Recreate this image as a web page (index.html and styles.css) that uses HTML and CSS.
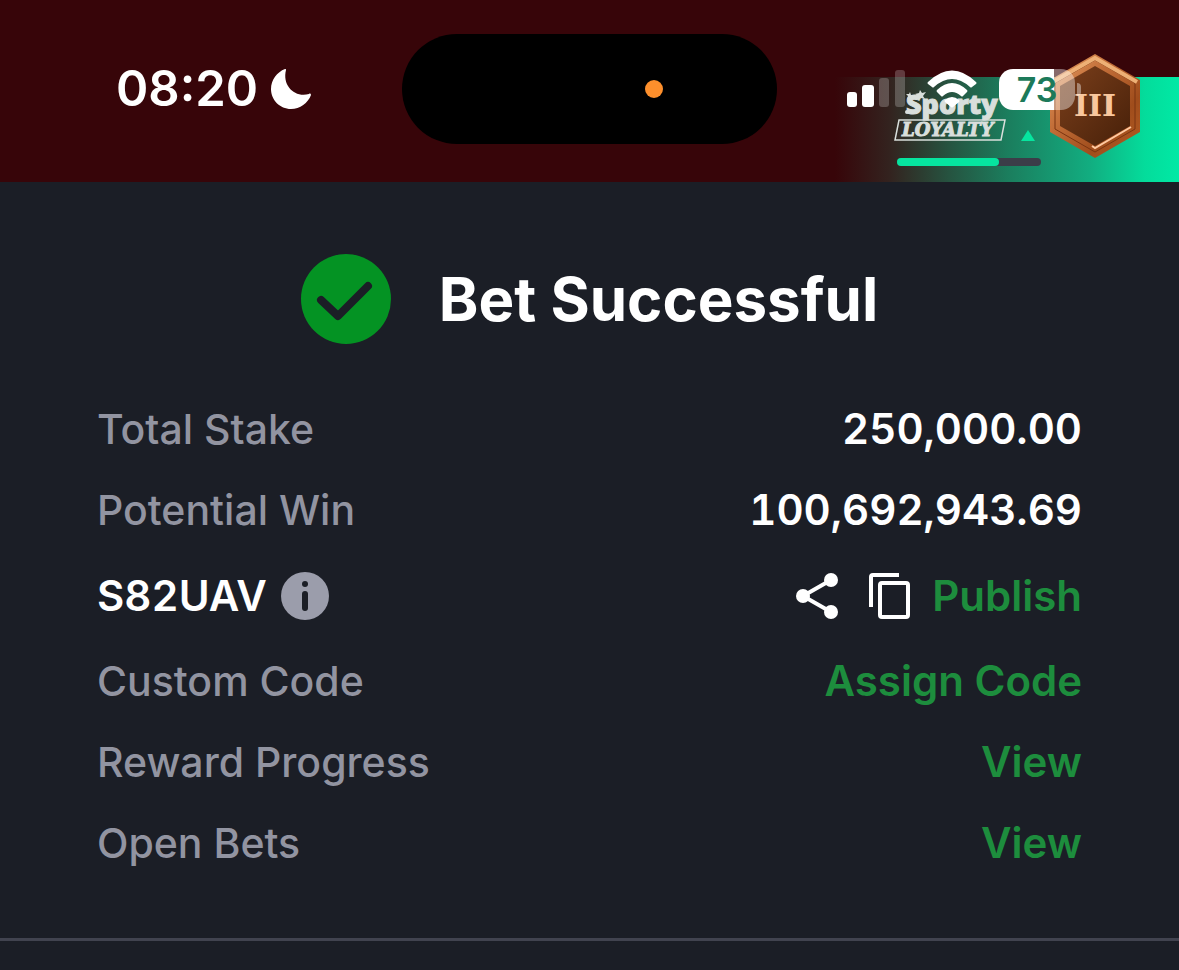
FILE: index.html
```html
<!DOCTYPE html>
<html lang="en">
<head>
    <meta charset="UTF-8">
    <meta name="viewport" content="width=device-width, initial-scale=1.0">
    <title>Bet Successful</title>
    <link rel="stylesheet" href="styles.css">
</head>
<body>
    <header class="header">
        <div class="loyalty">
            <div class="loyalty-info">
                <div class="loyalty-top">
                    <svg class="loyalty-logo" viewBox="0 0 112 52" role="img" aria-label="Sporty Loyalty">
                        <path d="M4 31H110L106 51H0Z" fill="none" stroke="#d9dfdc" stroke-width="1.5"/>
                        <circle cx="12" cy="23" r="2" fill="#d9dfdc"/>
                        <path d="M25 1l2 3 4-1-3 4 2 3-4-1-3 2 0-4-3-2 4-1z" fill="#d9dfdc"/>
                        <path d="M15 3l1 3 3 0-2 2 0 3-2-2-3 1 1-3-2-2 3 0z" fill="#d9dfdc"/>
                        <text class="logo-sporty" x="11" y="25">Sporty</text>
                        <text class="logo-loyalty" x="7" y="47">LOYALTY</text>
                    </svg>
                    <svg class="arrow-up" viewBox="0 0 14 11"><path d="M7 0L14 11H0Z" fill="#06e59f"/></svg>
                </div>
                <div class="progress"><div class="progress-value"></div></div>
            </div>
            <div class="badge">
                <svg class="badge-shape" viewBox="0 0 94 106">
                    <defs>
                        <linearGradient id="bronze" x1="0" y1="0" x2="1" y2="1">
                            <stop offset="0" stop-color="#e6a065"/>
                            <stop offset="0.35" stop-color="#c4703a"/>
                            <stop offset="0.7" stop-color="#a04d1c"/>
                            <stop offset="1" stop-color="#b55d22"/>
                        </linearGradient>
                        <linearGradient id="core" x1="0" y1="0" x2="1" y2="1">
                            <stop offset="0" stop-color="#7b3f1b"/>
                            <stop offset="1" stop-color="#472009"/>
                        </linearGradient>
                    </defs>
                    <path d="M47 1L92 27V79L47 105L2 79V27Z" fill="url(#bronze)"/>
                    <path d="M47 7L87 30V76L47 99L7 76V30Z" fill="none" stroke="#7b3410" stroke-width="1"/>
                    <path d="M5 29L47 5L89 29" fill="none" stroke="#eeb075" stroke-width="4"/>
                    <path d="M47 13L82 33V73L47 93L12 73V33Z" fill="url(#core)"/>
                    <path d="M44 93L47 95L83 74" fill="none" stroke="#ffc9a0" stroke-width="2"/>
                </svg>
                <span class="badge-level">III</span>
            </div>
        </div>
        <div class="status-bar">
            <div class="status-time">
                <span>08:20</span>
                <svg class="moon" viewBox="0 0 42 42"><path d="M15 1C7 4 1 12 1 21C1 32 10 41 21 41C30 41 38 35 41 27C41 26 40 25 39 26C25 30 12 18 16 2C16 1 16 1 15 1Z" fill="#fff"/></svg>
            </div>
            <div class="island"><span class="island-dot"></span></div>
            <div class="status-icons">
                <svg class="signal" viewBox="0 0 58 38" fill="#fff">
                    <rect x="0" y="22" width="10" height="15" rx="3"/>
                    <rect x="15" y="15" width="12" height="22" rx="3"/>
                    <rect x="32" y="8" width="10" height="29" rx="3" opacity="0.22"/>
                    <rect x="48" y="0" width="10" height="37" rx="3" opacity="0.22"/>
                </svg>
                <svg class="wifi" viewBox="0 0 50 38" fill="#fff">
                    <path d="M1 12Q25 -11 49 12Q50 13 49 14L45 17Q44 18 43 17Q25 1 7 17Q6 18 5 17L1 14Q0 13 1 12Z"/>
                    <path d="M10 20Q25 6 40 20Q41 21 40 22L36 26Q35 27 34 26Q25 18 16 26Q15 27 14 26L10 22Q9 21 10 20Z"/>
                    <path d="M18 30Q25 24 32 30Q33 31 32 32L26 37Q25 38 24 37L18 32Q17 31 18 30Z"/>
                </svg>
                <div class="battery"><span>73</span></div>
            </div>
        </div>
    </header>
    <main class="ticket">
        <div class="ticket-title">
            <svg class="check" viewBox="0 0 90 90">
                <circle cx="45" cy="45" r="45" fill="#049323"/>
                <path d="M20 46L37 62L67 32" fill="none" stroke="#1b1e26" stroke-width="8" stroke-linecap="round" stroke-linejoin="round"/>
            </svg>
            <h1>Bet Successful</h1>
        </div>
        <div class="ticket-rows">
            <div class="row">
                <span class="label">Total Stake</span>
                <span class="value">250,000.00</span>
            </div>
            <div class="row">
                <span class="label">Potential Win</span>
                <span class="value">100,692,943.69</span>
            </div>
            <div class="row row-code">
                <div class="code">
                    <span class="value">S82UAV</span>
                    <button class="icon-button" aria-label="Info">
                        <svg class="info" viewBox="0 0 48 48">
                            <circle cx="24" cy="24" r="24" fill="#9b9dab"/>
                            <circle cx="24" cy="12" r="3" fill="#1b1e26"/>
                            <path d="M24 22V36" stroke="#1b1e26" stroke-width="6" stroke-linecap="round"/>
                        </svg>
                    </button>
                </div>
                <div class="actions">
                    <div class="icons">
                        <button class="icon-button" aria-label="Share">
                            <svg class="share" viewBox="0 0 42 48">
                                <path d="M35 8L7 24L35 40" fill="none" stroke="#fff" stroke-width="4"/>
                                <circle cx="7" cy="24" r="7" fill="#fff"/>
                                <circle cx="35" cy="8" r="7" fill="#fff"/>
                                <circle cx="35" cy="40" r="7" fill="#fff"/>
                            </svg>
                        </button>
                        <button class="icon-button" aria-label="Copy">
                            <svg class="copy" viewBox="0 0 42 48" fill="none" stroke="#fff" stroke-width="4">
                                <path d="M31 3H5Q3 3 3 5V35"/>
                                <rect x="12" y="11" width="28" height="34" rx="2"/>
                            </svg>
                        </button>
                    </div>
                    <button class="link">Publish</button>
                </div>
            </div>
            <div class="row">
                <span class="label">Custom Code</span>
                <button class="link">Assign Code</button>
            </div>
            <div class="row">
                <span class="label">Reward Progress</span>
                <a class="link" href="#">View</a>
            </div>
            <div class="row">
                <span class="label">Open Bets</span>
                <a class="link" href="#">View</a>
            </div>
        </div>
    </main>
</body>
</html>
```
FILE: styles.css
```css
:root {
    --color-background: #1b1e26;
    --color-header: #370509;
    --color-label: #9294a1;
    --color-link: #1d8d3d;
    --color-mint: #06e59f;
    --color-line: #41434f;
}

* {
    padding: 0;
    margin: 0;
    box-sizing: border-box;
}

body {
    background: var(--color-background);
    color: #fff;
    font-family: Inter, "Liberation Sans", sans-serif;
}

svg {
    display: block;
}

button {
    background: none;
    border: none;
    font-family: inherit;
    cursor: pointer;
}

.header {
    position: relative;
    background: var(--color-header);
    padding: 34px 104px 38px;
}

.status-bar {
    position: relative;
    display: grid;
    grid-template-columns: 1fr 375px 1fr;
    align-items: center;
}

.status-time {
    display: flex;
    align-items: center;
    gap: 12px;
    padding-left: 12px;
    font-size: 49px;
    font-weight: 600;
    line-height: 60px;
}

.moon {
    width: 42px;
    height: 42px;
}

.island {
    height: 110px;
    border-radius: 55px;
    background: #000;
    display: flex;
    align-items: center;
    justify-content: flex-end;
    padding-right: 114px;
}

.island-dot {
    width: 18px;
    height: 18px;
    border-radius: 50%;
    background: #fd8f2c;
}

.status-icons {
    display: flex;
    align-items: center;
    justify-content: flex-end;
    gap: 22px;
}

.signal {
    width: 58px;
    height: 38px;
}

.wifi {
    width: 50px;
    height: 38px;
}

.battery {
    position: relative;
    width: 76px;
    height: 41px;
    border-radius: 14px;
    background: linear-gradient(90deg, #fff 73%, rgba(255, 255, 255, 0.4) 73%);
    color: #1c7a5a;
    font-size: 34px;
    font-weight: 600;
    line-height: 41px;
    text-align: center;
}

.battery::after {
    content: "";
    position: absolute;
    top: 14px;
    right: -6px;
    width: 4px;
    height: 13px;
    border-radius: 0 4px 4px 0;
    background: rgba(255, 255, 255, 0.4);
}

.loyalty {
    position: absolute;
    right: 0;
    bottom: 0;
    width: 344px;
    height: 105px;
    padding: 12px 0 0 60px;
    background: linear-gradient(90deg, #370509 0%, #33231f 16%, #265340 33%, #1b7d5d 50%, #12ad80 74%, #04dc9b 90%, #00e9a5 100%);
}

.loyalty-top {
    display: flex;
    align-items: flex-end;
    gap: 14px;
}

.loyalty-logo {
    width: 112px;
    height: 52px;
    overflow: visible;
}

.logo-sporty {
    fill: #d9dfdc;
    stroke: #d9dfdc;
    stroke-width: 1px;
    font-family: "Open Sans", sans-serif;
    font-size: 27px;
    font-weight: 800;
}

.logo-loyalty {
    fill: #d9dfdc;
    stroke: #d9dfdc;
    font-family: "DejaVu Serif", serif;
    font-size: 18px;
    font-weight: 700;
    font-style: italic;
}

.arrow-up {
    width: 14px;
    height: 11px;
}

.progress {
    width: 144px;
    height: 8px;
    margin: 17px 0 0 2px;
    border-radius: 4px;
    background: #3b3d48;
}

.progress-value {
    width: 71%;
    height: 100%;
    border-radius: 4px;
    background: var(--color-mint);
}

/* bronze tier badge, sticks out over the top of the loyalty strip */
.badge {
    position: absolute;
    right: 37px;
    bottom: 23px;
    width: 94px;
    height: 106px;
    display: grid;
    place-items: center;
}

.badge-shape,
.badge-level {
    grid-area: 1 / 1;
}

.badge-level {
    color: #f9c79d;
    font-family: "DejaVu Serif", serif;
    font-size: 30px;
    font-weight: 700;
    line-height: 40px;
}

.ticket {
    padding: 72px 97px 70px;
    border-bottom: 3px solid var(--color-line);
}

.ticket-title {
    display: flex;
    align-items: center;
    justify-content: center;
    gap: 48px;
    margin-bottom: 60px;
}

.check {
    width: 90px;
    height: 90px;
}

h1 {
    font-size: 60px;
    font-weight: 700;
    line-height: 72px;
}

.ticket-rows {
    display: flex;
    flex-direction: column;
    gap: 31px;
    line-height: 50px;
}

.row,
.code,
.actions,
.icons {
    display: flex;
    align-items: center;
}

.row {
    justify-content: space-between;
}

.row-code {
    min-height: 59px;
}

.code {
    gap: 14px;
}

.actions {
    gap: 22px;
}

.icons {
    gap: 30px;
}

.label {
    color: var(--color-label);
    font-size: 41px;
    font-weight: 500;
}

.value {
    font-size: 42px;
    font-weight: 600;
    font-variant-numeric: tabular-nums;
}

.link {
    color: var(--color-link);
    font-size: 42px;
    font-weight: 600;
    line-height: 50px;
    text-decoration: none;
}

.info {
    width: 48px;
    height: 48px;
}

.share,
.copy {
    width: 42px;
    height: 48px;
}
```
